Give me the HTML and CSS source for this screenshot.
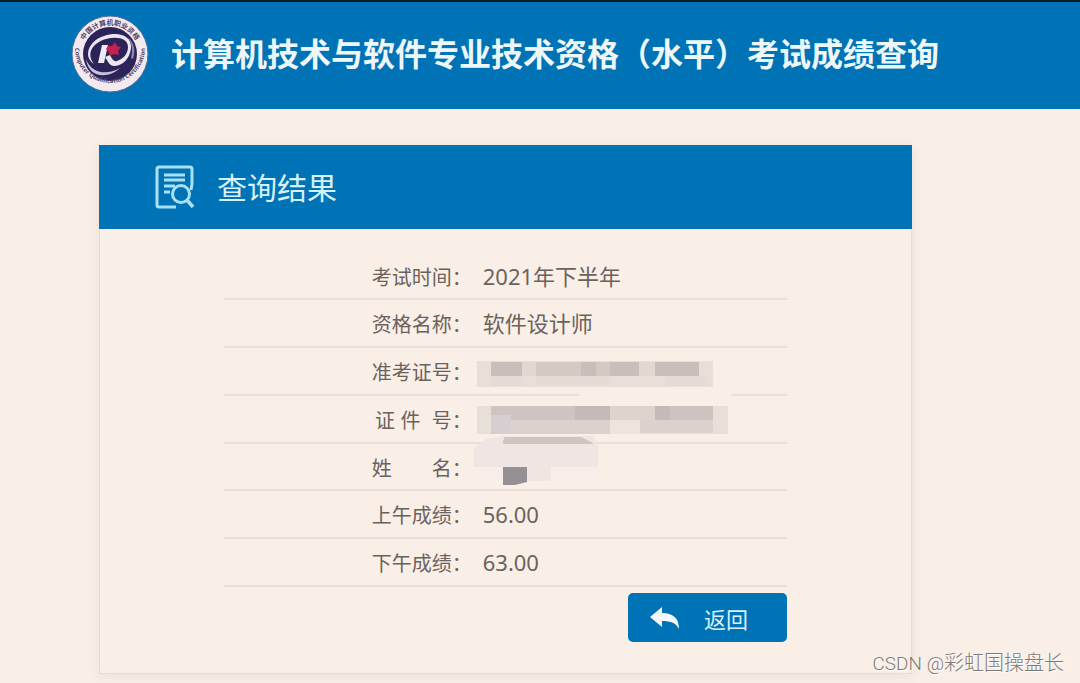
FILE: index.html
```html
<!DOCTYPE html>
<html lang="zh-CN">
<head>
<meta charset="utf-8">
<meta name="viewport" content="width=device-width, initial-scale=1">
<title>考试成绩查询</title>
<link rel="stylesheet" href="styles.css">
</head>
<body>
<header class="site-header">
  <svg class="logo" viewBox="0 0 78 78" aria-hidden="true">
    <defs>
      <path id="ring-top" d="M10 39a29 29 0 0 1 58 0"/>
      <path id="ring-bottom" d="M4 33a35 35 0 1 0 70 0"/>
    </defs>
    <circle cx="39" cy="39" r="38" fill="#f3eaf0" stroke="#536c9c" stroke-width="1"/>
    <circle cx="39" cy="39" r="27" fill="#2c2359"/>
    <text class="ring-text ring-text-cn"><textPath href="#ring-top" startOffset="50%" text-anchor="middle">中国计算机职业资格</textPath></text>
    <text class="ring-text ring-text-en"><textPath href="#ring-bottom" startOffset="50%" text-anchor="middle">Computer Qualification Certification</textPath></text>
    <path d="M23 49C12 42 17 26 33 21c15-5 28 0 27 12-1 11-9 18-17 18-4 0-6-4-9-9l5-2c2 4 4 7 7 6 6-2 11-7 11-14 0-9-11-11-22-8-14 4-20 15-12 25z" fill="#e9e6f2"/>
    <path d="M15 44c5 14 20 17 34 9-13 12-32 9-34-9z" fill="#c9c2dc"/>
    <path d="M31 30h6l-4 18h-6z" fill="#eee9f2"/>
    <path d="M37 31l4 0 3-4 2 4 4 1-3 4 1 4-5-1-4 2-1-4-3-3z" fill="#c3214f"/>
    <path d="M57 22c6 6 8 13 5 22l-2-1c2-8 1-14-3-21z" fill="#8d86b0"/>
  </svg>
  <h1 class="site-title">计算机技术与软件专业技术资格（水平）考试成绩查询</h1>
</header>
<main class="card">
  <div class="card-header">
    <svg class="doc-icon" viewBox="0 0 40 44" fill="none" stroke="#a9e0f4" stroke-width="3" aria-hidden="true">
      <path d="M21 42H4a2 2 0 0 1-2-2V4a2 2 0 0 1 2-2h31a2 2 0 0 1 2 2v15l-1 6"/>
      <path d="M9 10h21M9 15h21M9 21h11M9 27h6" stroke-width="3"/>
      <circle cx="26" cy="29" r="8.5"/>
      <path d="M32 35l6 7" stroke-width="3.5"/>
    </svg>
    <h2 class="card-title">查询结果</h2>
  </div>
  <div class="card-body">
    <table class="results">
      <tbody>
        <tr><th scope="row">考试时间：</th><td>2021年下半年</td></tr>
        <tr><th scope="row">资格名称：</th><td>软件设计师</td></tr>
        <tr><th scope="row">准考证号：</th><td class="masked">
          <svg class="mask" viewBox="471 348 300 145" shape-rendering="crispEdges" aria-hidden="true">
            <path d="M578 390h152v12H578z" fill="#f9efe6"/>
            <path d="M476 361h236v26H476z" fill="#e9dfd8"/>
            <path d="M490 362h208v14H490z" fill="#d3cac4"/>
            <path d="M490 362h31v14h-31zM580 362h15v14h-15zM609 362h29v14h-29zM654 362h44v14h-44z" fill="#c8beba"/>
            <path d="M521 362h14v14h-14zM638 362h16v14h-16z" fill="#e1d8d1"/>
            <path d="M490 376h31v10h-31zM535 376h74v9h-74zM665 376h40v10h-40z" fill="#e4dbd4"/>
            <path d="M476 406h251v28H476z" fill="#e8dfd8"/>
            <path d="M490 406h119v14H490z" fill="#cec4c0"/>
            <path d="M574 406h35v14h-35zM654 406h15v14h-15z" fill="#c4bab6"/>
            <path d="M669 406h43v14h-43z" fill="#cdc4bf"/>
            <path d="M609 406h45v14h-45z" fill="#ddd4ce"/>
            <path d="M490 420h119v14H490zM639 420h73v13h-73z" fill="#dbd2cd"/>
            <path d="M490 415h20v19h-20z" fill="#d6cfd2"/>
            <path d="M609 420h30v14h-30z" fill="#eee4dc"/>
            <path d="M473 449l12-10 18-3h89l5 10v21H473z" fill="#efe6e4"/>
            <path d="M503 437h77l12 6-1 1h-89z" fill="#cec6bf"/>
            <path d="M478 467h120v13H478z" fill="#f8ede9"/>
            <path d="M526 467h24v14h-24z" fill="#f1e5e2"/>
            <path d="M502 467h24v15l-12 3h-12z" fill="#959093" shape-rendering="auto"/>
          </svg>
        </td></tr>
        <tr><th scope="row" class="spaced">证 件  号：</th><td></td></tr>
        <tr><th scope="row">姓　　名：</th><td></td></tr>
        <tr><th scope="row">上午成绩：</th><td>56.00</td></tr>
        <tr><th scope="row">下午成绩：</th><td>63.00</td></tr>
      </tbody>
    </table>
    <button class="back" type="button">
      <svg class="back-icon" viewBox="0 0 30 22" aria-hidden="true"><path d="M0 10L12 0v6c11 0 17 5 17 16-3-6-8-8-17-8v6z" fill="#f4f8fb"/></svg>
      <span>返回</span>
    </button>
  </div>
</main>
<p class="watermark"><span class="watermark-latin">CSDN @</span>彩虹国操盘长</p>
</body>
</html>
```
FILE: styles.css
```css
* {
  box-sizing: border-box;
}

body {
  position: relative;
  margin: 0;
  min-height: 100vh;
  padding-bottom: 10px;
  background: #f9efe6;
  color: #6b625e;
  font-family: "Noto Sans", "Noto Sans CJK SC", sans-serif;
}

.site-header {
  display: flex;
  align-items: center;
  gap: 22px;
  height: 109px;
  padding: 0 0 4px 71px;
  border-top: 2px solid #071d2c;
  background: #0072b6;
}

.logo {
  flex: none;
  width: 78px;
  height: 78px;
}

.ring-text {
  fill: #51446b;
  font-weight: 700;
}

.ring-text-cn {
  font-size: 7px;
}

.ring-text-en {
  font-size: 6px;
}

.site-title {
  margin: 0;
  padding-bottom: 4px;
  color: #edf7f8;
  font-family: "Noto Sans CJK SC", sans-serif;
  font-size: 32px;
  font-weight: 700;
  line-height: 48px;
  white-space: nowrap;
}

.card {
  margin: 36px 168px 0 99px;
  border: 1px solid #e8ddd5;
  border-top: 0;
  box-shadow: 0 2px 10px #e9dfd7;
}

.card-header {
  display: flex;
  align-items: center;
  gap: 22px;
  height: 84px;
  margin: 0 -1px;
  padding-left: 56px;
  background: #0072b6;
}

.doc-icon {
  width: 40px;
  height: 44px;
}

.card-title {
  margin: 0;
  padding-top: 2px;
  color: #d6f1f8;
  font-size: 30px;
  font-weight: 400;
  line-height: 44px;
}

.card-body {
  display: flex;
  flex-direction: column;
  align-items: flex-end;
  padding: 24px 124px 31px;
}

.results {
  width: 100%;
  height: 334px;
  table-layout: fixed;
  border-collapse: collapse;
}

.results th,
.results td {
  padding: 0;
  border-bottom: 2px solid #ebe0d8;
  line-height: 32px;
}

.results th {
  width: 44%;
  padding-top: 4px;
  font-size: 20px;
  font-weight: 400;
  text-align: right;
  white-space: pre;
}

.results .spaced {
  font-family: "Liberation Sans", "Noto Sans CJK SC", sans-serif;
}

.results td {
  padding-left: 11px;
  font-size: 22px;
}

.results .masked {
  position: relative;
}

.mask {
  position: absolute;
  top: 0;
  left: 0;
  width: 300px;
  height: 145px;
}

.back {
  display: flex;
  align-items: center;
  gap: 24px;
  width: 159px;
  height: 49px;
  margin-top: 6px;
  padding: 0 22px;
  border: 0;
  border-radius: 5px;
  background: #0072b6;
  color: #d6f1f8;
  font-family: inherit;
  font-size: 22px;
}

.back-icon {
  width: 30px;
  height: 22px;
}

.watermark {
  position: absolute;
  right: 16px;
  bottom: 4px;
  margin: 0;
  color: #7d7977;
  font-family: "Noto Sans CJK SC", sans-serif;
  font-size: 20px;
  font-weight: 300;
  line-height: 32px;
  text-shadow: 1px 1px 0 #ffffff;
}

.watermark-latin {
  font-family: Roboto, sans-serif;
  font-size: 19px;
}
```
